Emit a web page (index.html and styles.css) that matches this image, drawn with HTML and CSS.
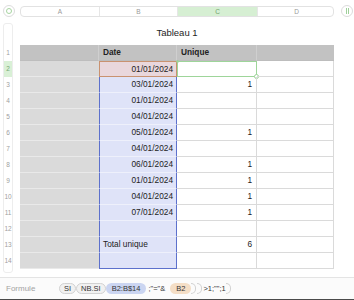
FILE: index.html
```html
<!DOCTYPE html>
<html lang="fr">
<head>
  <meta charset="UTF-8">
  <title>Tableau 1</title>
  <link rel="stylesheet" href="styles.css">
</head>
<body>
<div class="app">

  <!-- en-têtes de colonnes -->
  <div class="colbar">
    <div class="corner"><span class="corner-dot"></span></div>
    <div class="letters">
      <span>A</span>
      <span>B</span>
      <span class="active">C</span>
      <span>D</span>
    </div>
    <div class="freeze"><span></span><span></span></div>
  </div>

  <div class="sheet">
    <!-- numéros de lignes -->
    <div class="rownums">
      <div class="rn-top"></div>
      <div class="rn">1</div>
      <div class="rn active">2</div>
      <div class="rn">3</div>
      <div class="rn">4</div>
      <div class="rn">5</div>
      <div class="rn">6</div>
      <div class="rn">7</div>
      <div class="rn">8</div>
      <div class="rn">9</div>
      <div class="rn">10</div>
      <div class="rn">11</div>
      <div class="rn">12</div>
      <div class="rn">13</div>
      <div class="rn">14</div>
    </div>

    <div class="table-wrap">
      <div class="title">Tableau 1</div>
      <div class="grid">
        <div class="cell head"></div>
        <div class="cell head">Date</div>
        <div class="cell head">Unique</div>
        <div class="cell head last"></div>

        <div class="cell a"></div>
        <div class="cell b ref">01/01/2024</div>
        <div class="cell c sel"><span class="knob tl"></span><span class="knob br"></span></div>
        <div class="cell d"></div>

        <div class="cell a"></div>
        <div class="cell b">03/01/2024</div>
        <div class="cell c">1</div>
        <div class="cell d"></div>

        <div class="cell a"></div>
        <div class="cell b">01/01/2024</div>
        <div class="cell c"></div>
        <div class="cell d"></div>

        <div class="cell a"></div>
        <div class="cell b">04/01/2024</div>
        <div class="cell c"></div>
        <div class="cell d"></div>

        <div class="cell a"></div>
        <div class="cell b">05/01/2024</div>
        <div class="cell c">1</div>
        <div class="cell d"></div>

        <div class="cell a"></div>
        <div class="cell b">04/01/2024</div>
        <div class="cell c"></div>
        <div class="cell d"></div>

        <div class="cell a"></div>
        <div class="cell b">06/01/2024</div>
        <div class="cell c">1</div>
        <div class="cell d"></div>

        <div class="cell a"></div>
        <div class="cell b">01/01/2024</div>
        <div class="cell c">1</div>
        <div class="cell d"></div>

        <div class="cell a"></div>
        <div class="cell b">04/01/2024</div>
        <div class="cell c">1</div>
        <div class="cell d"></div>

        <div class="cell a"></div>
        <div class="cell b">07/01/2024</div>
        <div class="cell c">1</div>
        <div class="cell d"></div>

        <div class="cell a"></div>
        <div class="cell b"></div>
        <div class="cell c"></div>
        <div class="cell d"></div>

        <div class="cell a"></div>
        <div class="cell b text">Total unique</div>
        <div class="cell c">6</div>
        <div class="cell d"></div>

        <div class="cell a"></div>
        <div class="cell b end"></div>
        <div class="cell c"></div>
        <div class="cell d"></div>
      </div>
    </div>
  </div>

  <!-- barre de formule -->
  <div class="formula">
    <span class="label">Formule</span>
    <span class="fn">SI</span>
    <span class="fn">NB.SI</span>
    <span class="tok blue">B2:B$14</span>
    <span class="txt">;"="&amp;</span>
    <span class="tok orange">B2</span>
    <span class="close"></span><span class="close"></span>
    <span class="txt">&gt;1;"";1</span>
    <span class="close"></span>
  </div>
</div>
</body>
</html>
```

FILE: styles.css
```css
* { box-sizing: border-box; }
body {
  margin: 0;
  background: #fff;
  font-family: 'Liberation Sans', Arial, sans-serif;
  color: #222;
}
.app {
  width: 354px;
  height: 300px;
  display: flex;
  flex-direction: column;
  overflow: hidden;
}

/* en-têtes de colonnes */
.colbar {
  height: 22px;
  display: flex;
  align-items: center;
}
.corner {
  width: 12px;
  height: 12px;
  margin-left: 3px;
  margin-right: 5px;
  border: 1px solid #dcdcdc;
  border-radius: 50%;
  display: flex;
  align-items: center;
  justify-content: center;
}
.corner-dot {
  width: 6px;
  height: 6px;
  border: 1px solid #a6d4a0;
  border-radius: 50%;
}
.letters {
  width: 314px;
  height: 11px;
  display: grid;
  grid-template-columns: 79px 78px 80px 77px;
  border: 1px solid #e2e2e2;
  border-radius: 4px;
  overflow: hidden;
}
.letters span {
  font-size: 6.5px;
  line-height: 9px;
  color: #9a9a9a;
  text-align: center;
  border-right: 1px solid #e6e6e6;
}
.letters span:last-child { border-right: 0; }
.letters .active {
  background: #d6efd3;
  color: #74a470;
}
.freeze {
  width: 12px;
  height: 12px;
  margin-left: 7px;
  border: 1px solid #dcdcdc;
  border-radius: 50%;
  display: flex;
  align-items: center;
  justify-content: center;
  gap: 1px;
}
.freeze span {
  width: 1px;
  height: 6px;
  background: #9fd09a;
}

/* feuille */
.sheet {
  flex: 1;
  display: flex;
}
.rownums {
  width: 10px;
  margin-left: 3px;
  margin-right: 7px;
  margin-top: 1px;
  height: 250px;
  border: 1px solid #ededed;
  border-radius: 3px;
  overflow: hidden;
}
.rn-top { height: 21px; }
.rn {
  height: 16px;
  font-size: 6.5px;
  line-height: 16px;
  color: #a0a0a0;
  text-align: center;
}
.rn.active {
  background: #d9f0d6;
  color: #78a874;
}
.table-wrap { width: 314px; }
.title {
  height: 23px;
  font-size: 9.5px;
  line-height: 22px;
  text-align: center;
  color: #1e1e1e;
}
.grid {
  display: grid;
  grid-template-columns: 79px 78px 80px 77px;
  grid-auto-rows: 16px;
}
.cell {
  font-size: 8.3px;
  line-height: 15px;
  white-space: nowrap;
  border-bottom: 1px solid #dadada;
  position: relative;
}
.head {
  background: #c2c2c2;
  font-weight: bold;
  padding-left: 4px;
  border-bottom-color: #bdbdbd;
  border-right: 1px solid #cfcfcf;
}
.head.last { border-right: 0; }
.a {
  background: #dadada;
  border-bottom-color: #e9e9e9;
}
.b {
  background: #dfe3f8;
  border-left: 1px solid #5d71cc;
  border-right: 1px solid #5d71cc;
  border-bottom-color: #eef0fb;
  text-align: right;
  padding-right: 3px;
}
.b.text {
  text-align: left;
  padding-left: 3px;
}
.b.end { border-bottom-color: #5d71cc; }
.b.ref {
  background: #e9d7dc;
  border: 1px solid #c99270;
}
.c {
  text-align: right;
  padding-right: 4px;
  border-right: 1px solid #dadada;
}
.d { border-right: 1px solid #dadada; }
.c.sel {
  border: 1px solid #9ed59a;
}
.knob {
  position: absolute;
  border-radius: 50%;
  background: #fff;
  border: 1px solid #9ed59a;
}
.knob.br {
  width: 5px;
  height: 5px;
  right: -3px;
  bottom: -3px;
}
.knob.tl {
  width: 3px;
  height: 3px;
  left: -2px;
  top: -2px;
  background: #9ed59a;
}

/* barre de formule */
.formula {
  height: 23px;
  display: flex;
  align-items: center;
  padding-left: 6px;
  background: #fbfbfb;
  border-top: 1px solid #e4e4e4;
  border-bottom: 1px solid #4a4a4a;
  font-size: 7.5px;
}
.label {
  width: 53px;
  font-size: 8px;
  color: #a3a3a3;
}
.fn, .tok {
  height: 11px;
  line-height: 9px;
  border-radius: 6px;
  white-space: nowrap;
}
.fn {
  padding: 0 4px;
  border: 1px solid #d2d2d2;
  background: #f1f1f1;
  color: #333;
}
.tok {
  padding: 1px 6px 0;
  color: #333;
}
.tok.blue {
  background: #cbd5f1;
  margin-right: 2px;
}
.tok.orange {
  background: #f4dec6;
  margin-left: 5px;
}
.txt {
  color: #333;
  white-space: nowrap;
}
.close {
  width: 5px;
  height: 11px;
  border: 1px solid #d2d2d2;
  border-left: 0;
  border-radius: 0 6px 6px 0;
  margin-right: 1px;
}
```
